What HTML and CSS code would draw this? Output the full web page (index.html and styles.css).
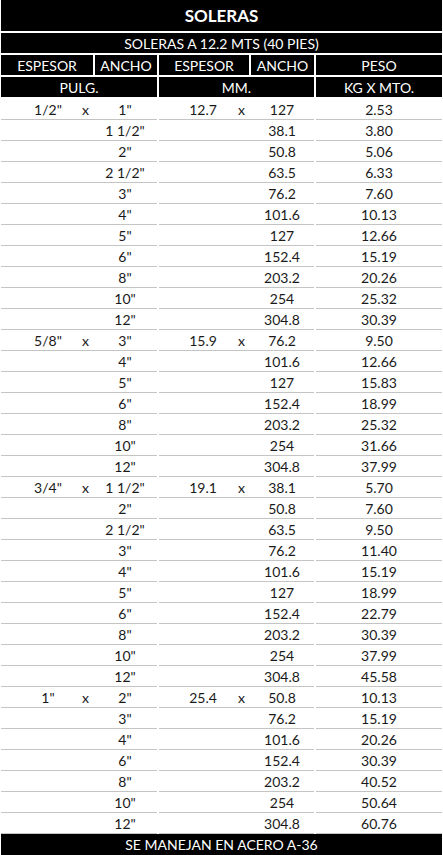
FILE: index.html
```html
<!DOCTYPE html>
<html lang="es">
<head>
<meta charset="utf-8">
<title>Soleras</title>
<link rel="stylesheet" href="styles.css">
</head>
<body>
<div class="sheet">
  <div class="head-grid">
    <div class="h title span5">SOLERAS</div>
    <div class="h span5">SOLERAS A 12.2 MTS (40 PIES)</div>
    <div class="h">ESPESOR</div>
    <div class="h">ANCHO</div>
    <div class="h">ESPESOR</div>
    <div class="h">ANCHO</div>
    <div class="h">PESO</div>
    <div class="h span2">PULG.</div>
    <div class="h span2">MM.</div>
    <div class="h">KG X MTO.</div>
  </div>
  <div class="data-grid" id="data"></div>
  <div class="footer">SE MANEJAN EN ACERO A-36</div>
</div>
<script>
var groups = [
  ['1/2"', '12.7', [['1"','127','2.53'],['1 1/2"','38.1','3.80'],['2"','50.8','5.06'],['2 1/2"','63.5','6.33'],['3"','76.2','7.60'],['4"','101.6','10.13'],['5"','127','12.66'],['6"','152.4','15.19'],['8"','203.2','20.26'],['10"','254','25.32'],['12"','304.8','30.39']]],
  ['5/8"', '15.9', [['3"','76.2','9.50'],['4"','101.6','12.66'],['5"','127','15.83'],['6"','152.4','18.99'],['8"','203.2','25.32'],['10"','254','31.66'],['12"','304.8','37.99']]],
  ['3/4"', '19.1', [['1 1/2"','38.1','5.70'],['2"','50.8','7.60'],['2 1/2"','63.5','9.50'],['3"','76.2','11.40'],['4"','101.6','15.19'],['5"','127','18.99'],['6"','152.4','22.79'],['8"','203.2','30.39'],['10"','254','37.99'],['12"','304.8','45.58']]],
  ['1"', '25.4', [['2"','50.8','10.13'],['3"','76.2','15.19'],['4"','101.6','20.26'],['6"','152.4','30.39'],['8"','203.2','40.52'],['10"','254','50.64'],['12"','304.8','60.76']]]
];
var html = '';
groups.forEach(function (g) {
  g[2].forEach(function (r, i) {
    var first = i === 0;
    html += '<div class="d span2 pulg"><span class="a">' + (first ? g[0] : '') + '</span><span class="x">' + (first ? 'x' : '') + '</span><span class="b">' + r[0] + '</span></div>';
    html += '<div class="d span2 mm"><span class="a">' + (first ? g[1] : '') + '</span><span class="x">' + (first ? 'x' : '') + '</span><span class="b">' + r[1] + '</span></div>';
    html += '<div class="d peso">' + r[2] + '</div>';
  });
});
document.getElementById('data').innerHTML = html;
</script>
</body>
</html>
```
FILE: styles.css
```css
html, body {
  margin: 0;
  padding: 0;
  background: #fff;
}
body {
  font-family: Lato, "Open Sans", "Liberation Sans", sans-serif;
  font-size: 13px;
  color: #1a1a1a;
}
.sheet {
  width: 441px;
  margin-left: 1px;
}
.head-grid,
.data-grid {
  display: grid;
  grid-template-columns: 92px 62px 90px 63px 126px;
  column-gap: 2px;
}
.head-grid {
  row-gap: 2px;
  margin-bottom: 2px;
}
.h {
  background: #000;
  color: #fff;
  height: 20px;
  line-height: 21px;
  text-align: center;
  font-size: 14px;
  white-space: nowrap;
}
.h.title {
  height: 31px;
  line-height: 31px;
  font-size: 17px;
  font-weight: 700;
}
.span5 { grid-column: span 5; }
.span2 { grid-column: span 2; }
.d {
  height: 20px;
  line-height: 21px;
  border-bottom: 1px solid #c4c4c4;
  white-space: nowrap;
  font-size: 14px;
}
.d.pulg, .d.mm {
  display: flex;
}
.d .a, .d .x, .d .b {
  text-align: center;
}
.pulg .a { margin-left: 17px; width: 60px; }
.pulg .x { width: 15px; }
.pulg .b { flex: 1; }
.mm .a { margin-left: 14px; width: 60px; }
.mm .x { width: 17px; }
.mm .b { flex: 1; }
.d.peso {
  text-align: center;
}
.footer {
  background: #000;
  color: #fff;
  height: 21px;
  line-height: 22px;
  text-align: center;
  font-size: 14px;
}
```
